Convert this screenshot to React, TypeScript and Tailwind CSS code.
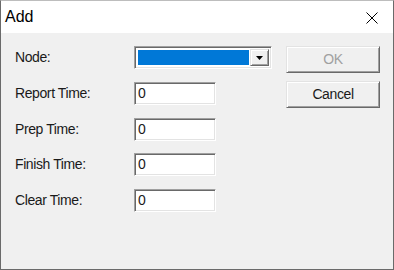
import React from 'react';

const sunken =
  'border border-t-[#a0a0a0] border-l-[#a0a0a0] border-r-white border-b-white shadow-[inset_1px_1px_0_#696969,inset_-1px_-1px_0_#e3e3e3]';
const raised =
  'border border-t-[#e3e3e3] border-l-[#e3e3e3] border-r-[#696969] border-b-[#696969] shadow-[inset_1px_1px_0_#ffffff,inset_-1px_-1px_0_#a0a0a0]';

function Field({ label, first }: { label: string; first?: boolean }) {
  return (
    <div className={`flex items-center h-[23px] ${first ? '' : 'mt-[13px]'}`}>
      <div className="w-[119px]">{label}</div>
      <div className={`w-[82px] h-[23px] bg-white px-[3px] flex items-center ${sunken}`}>0</div>
    </div>
  );
}

export default function App() {
  return (
    <div
      className="w-[394px] h-[270px] flex flex-col border border-[#6a6a6a] border-t-[#bdbdbd] bg-white text-black"
      style={{ fontFamily: '"Liberation Sans", Arial, sans-serif' }}
    >
      <div className="h-[32px] flex items-center justify-between pl-[4px] pr-[15px] bg-white">
        <span className="text-[16px] leading-none">Add</span>
        <svg width="12" height="12" viewBox="0 0 12 12" className="mt-[1px]">
          <path d="M0.5 0.5 L11.5 11.5 M11.5 0.5 L0.5 11.5" stroke="#000" strokeWidth="1" fill="none" />
        </svg>
      </div>

      <div className="flex-1 bg-[#f0f0f0] flex pl-[14px] pt-[13px] text-[14px] tracking-[-0.4px] text-[#1a1a1a]">
        <div className="flex flex-col w-[257px]">
          <div className="flex items-center h-[23px]">
            <div className="w-[119px]">Node:</div>
            <div className={`w-[138px] h-[23px] bg-white flex p-[2px] ${sunken}`}>
              <div className="flex-1 bg-[#0078d7] m-[1px]" />
              <div className={`w-[19px] bg-[#f0f0f0] flex items-center justify-center ${raised}`}>
                <svg width="7" height="4" viewBox="0 0 7 4">
                  <path d="M0 0 H7 L3.5 4 Z" fill="#000" />
                </svg>
              </div>
            </div>
          </div>
          <div className="mt-[13px]">
            <Field label="Report Time:" first />
          </div>
          <Field label="Prep Time:" />
          <div className="mt-[-1px]">
            <Field label="Finish Time:" />
          </div>
          <Field label="Clear Time:" />
        </div>

        <div className="flex flex-col ml-[14px]">
          <div className={`w-[94px] h-[27px] flex items-center justify-center text-[#a0a0a0] ${raised}`}>OK</div>
          <div className={`mt-[8px] w-[94px] h-[27px] flex items-center justify-center ${raised}`}>Cancel</div>
        </div>
      </div>
    </div>
  );
}
